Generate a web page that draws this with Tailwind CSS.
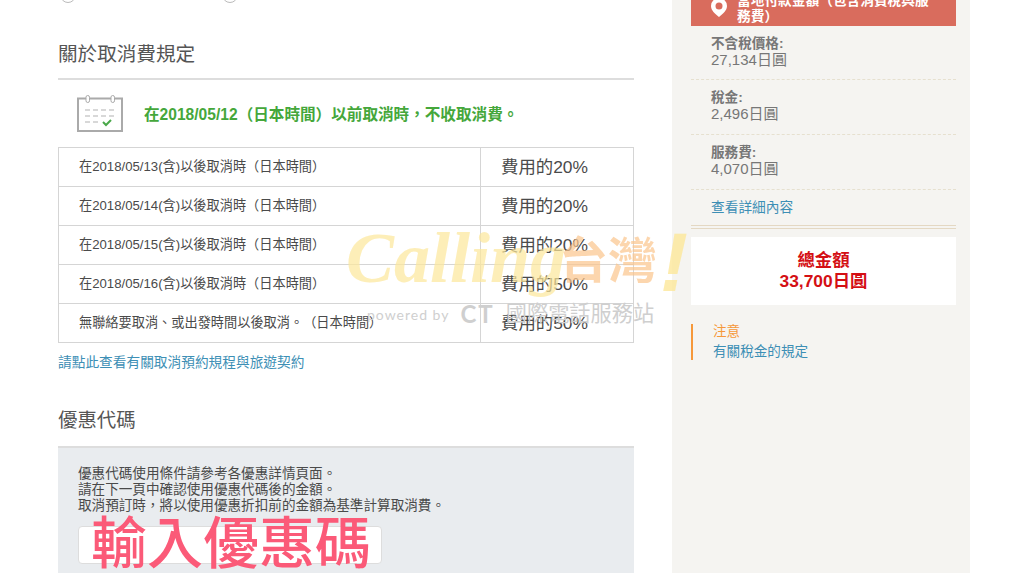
<!DOCTYPE html>
<html lang="zh-Hant">
<head>
  <meta charset="UTF-8" />
  <title>關於取消費規定</title>
  <script src="https://cdn.jsdelivr.net/npm/@tailwindcss/browser@4"></script>
</head>
<body class="bg-white h-[576px] w-[1024px] overflow-hidden relative font-['Liberation_Sans','Noto_Sans_CJK_TC',sans-serif] text-[#4a4a4a] [text-spacing-trim:space-all]">
  <div class="flex h-[573px] pl-[58px] gap-[38px]">
    <!-- Main column -->
    <main class="w-[576px] shrink-0 relative">
      <!-- radio row cut off by the top edge -->
      <div class="flex gap-[146px] h-[4px] pl-[2px]">
        <span class="block w-[16px] h-[16px] rounded-full border border-[#bbb] bg-white -mt-[13px]"></span>
        <span class="block w-[16px] h-[16px] rounded-full border border-[#bbb] bg-white -mt-[13px]"></span>
      </div>

      <h2 class="mt-[37px] text-[19.6px] leading-[26px] text-[#555]">關於取消費規定</h2>
      <div class="mt-[11px] border-t-2 border-[#ddd]"></div>

      <div class="flex items-center h-[67px] pl-[19px] gap-[21px]">
        <svg class="w-[46px] h-[37px]" viewBox="0 0 46 37" fill="none">
          <path d="M1 3.500h44v32.500H1z" stroke="#aaa" stroke-width="2"/>
          <rect x="9" y="0.500" width="3.500" height="7" rx="1.700" fill="#fff" stroke="#aaa"/>
          <rect x="34" y="0.500" width="3.500" height="7" rx="1.700" fill="#fff" stroke="#aaa"/>
          <path d="M8 15h5m3 0h5m3 0h5m3 0h5M8 21h5m3 0h5m3 0h5m3 0h5M8 27h5m3 0h5" stroke="#ccc" stroke-width="1.500"/>
          <path d="M26 27l3 3 5-5" stroke="#4aa84a" stroke-width="2"/>
        </svg>
        <p class="pt-[2px] text-[15.6px] font-bold text-[#45a73b]">在2018/05/12（日本時間）以前取消時，不收取消費。</p>
      </div>

      <table class="w-[576px] border-collapse text-[13.2px]">
        <tbody>
          <tr class="h-[39px]">
            <td class="border border-[#d5d5d5] pl-[20px] w-[422px]">在2018/05/13(含)以後取消時（日本時間）</td>
            <td class="border border-[#d5d5d5] pl-[20px] text-[17.4px]">費用的20%</td>
          </tr>
          <tr class="h-[39px]">
            <td class="border border-[#d5d5d5] pl-[20px]">在2018/05/14(含)以後取消時（日本時間）</td>
            <td class="border border-[#d5d5d5] pl-[20px] text-[17.4px]">費用的20%</td>
          </tr>
          <tr class="h-[39px]">
            <td class="border border-[#d5d5d5] pl-[20px]">在2018/05/15(含)以後取消時（日本時間）</td>
            <td class="border border-[#d5d5d5] pl-[20px] text-[17.4px]">費用的20%</td>
          </tr>
          <tr class="h-[39px]">
            <td class="border border-[#d5d5d5] pl-[20px]">在2018/05/16(含)以後取消時（日本時間）</td>
            <td class="border border-[#d5d5d5] pl-[20px] text-[17.4px]">費用的50%</td>
          </tr>
          <tr class="h-[39px]">
            <td class="border border-[#d5d5d5] pl-[20px]">無聯絡要取消、或出發時間以後取消。（日本時間）</td>
            <td class="border border-[#d5d5d5] pl-[20px] text-[17.4px]">費用的50%</td>
          </tr>
        </tbody>
      </table>

      <a class="block mt-[11px] text-[13.7px] leading-[18px] text-[#3d8fb5]">請點此查看有關取消預約規程與旅遊契約</a>

      <h2 class="mt-[35px] text-[19.4px] leading-[26px] text-[#555]">優惠代碼</h2>
      <section class="mt-[13px] h-[127px] bg-[#e9ecef] border-t-2 border-[#ddd] pt-[18px] pl-[20px] text-[13.6px] leading-[16px]">
        <p>優惠代碼使用條件請參考各優惠詳情頁面。</p>
        <p>請在下一頁中確認使用優惠代碼後的金額。</p>
        <p>取消預訂時，將以使用優惠折扣前的金額為基準計算取消費。</p>
        <div class="mt-[12px] w-[304px] h-[38px] bg-white border border-[#ddd] rounded-[4px]"></div>
      </section>
    </main>

    <!-- Price sidebar -->
    <aside class="w-[298px] shrink-0 bg-[#f5f4f1] pl-[19px] pr-[14px] text-[#777]">
      <div class="w-[265px] h-[26px] bg-[#d96c5d] overflow-hidden relative">
        <svg class="absolute left-[20px] top-[-2px] w-[16px] h-[19px]" viewBox="0 0 16 19">
          <path d="M8 0a8 8 0 0 1 8 8c0 4.500-4 7.500-8 11-4-3.500-8-6.500-8-11a8 8 0 0 1 8-8z" fill="#fff"/>
          <circle cx="8" cy="8" r="3.500" fill="#d96c5d"/>
        </svg>
        <p class="absolute left-[46px] top-[-7px] w-[196px] text-[13.7px] leading-[16px] font-bold text-white">當地付款金額（包含消費稅與服務費）</p>
      </div>
      <dl class="text-[15px] leading-[16px]">
        <div class="pl-[20px] pt-[10px] h-[54px] border-b border-dashed border-[#e6e0cf]">
          <dt class="text-[13.6px] font-bold">不含稅價格:</dt>
          <dd>27,134日圓</dd>
        </div>
        <div class="pl-[20px] pt-[10px] h-[55px] border-b border-dashed border-[#e6e0cf]">
          <dt class="text-[13.6px] font-bold">稅金:</dt>
          <dd>2,496日圓</dd>
        </div>
        <div class="pl-[20px] pt-[10px] h-[55px] border-b border-dashed border-[#e6e0cf]">
          <dt class="text-[13.6px] font-bold">服務費:</dt>
          <dd>4,070日圓</dd>
        </div>
      </dl>
      <a class="block pl-[20px] pt-[10px] h-[35px] text-[13.7px] leading-[16px] text-[#3d8fb5]">查看詳細內容</a>
      <div class="h-[4px] border-y border-[#e4d8c3]"></div>
      <div class="mt-[8px] h-[68px] bg-white flex flex-col items-center justify-center text-[17.4px] leading-[21px] font-bold text-[#d40f14]">
        <p>總金額</p>
        <p>33,700日圓</p>
      </div>
      <div class="mt-[19px] flow-root border-l-2 border-[#f6983a] pl-[20px] text-[13.6px] leading-[20px] h-[36px]">
        <p class="text-[#f6983a] -mt-[2px]">注意</p>
        <a class="block text-[#3d8fb5]">有關稅金的規定</a>
      </div>
    </aside>
  </div>

  <!-- Watermark over the page -->
  <div class="absolute left-[346px] top-[220px] text-[72px] leading-[76px] italic font-bold font-['Liberation_Serif',serif] text-[#fce79a]/70">Calling</div>
  <div class="absolute left-[559px] top-[236px] text-[49px] leading-[50px] font-bold text-[#fbc48c]/70">台灣</div>
  <div class="absolute left-[660px] top-[220px] text-[84px] leading-[84px] italic font-bold text-[#fce79a]/80">!</div>
  <div class="absolute left-[367px] top-[303px] flex items-center gap-[11px] text-[#cfcfcf]">
    <span class="text-[14px] tracking-[1px] font-['Lato',sans-serif]">powered by</span>
    <span class="text-[24px] leading-[22px] tracking-[2px] font-bold font-['Lato',sans-serif]">CT</span>
    <span class="text-[21.2px] leading-[22px]">國際電話服務站</span>
  </div>

  <!-- Big caption over the coupon input -->
  <div class="absolute left-[91px] top-[512px] text-[56px] leading-[64px] font-medium text-[#fb5a78]">輸入優惠碼</div>
</body>
</html>
